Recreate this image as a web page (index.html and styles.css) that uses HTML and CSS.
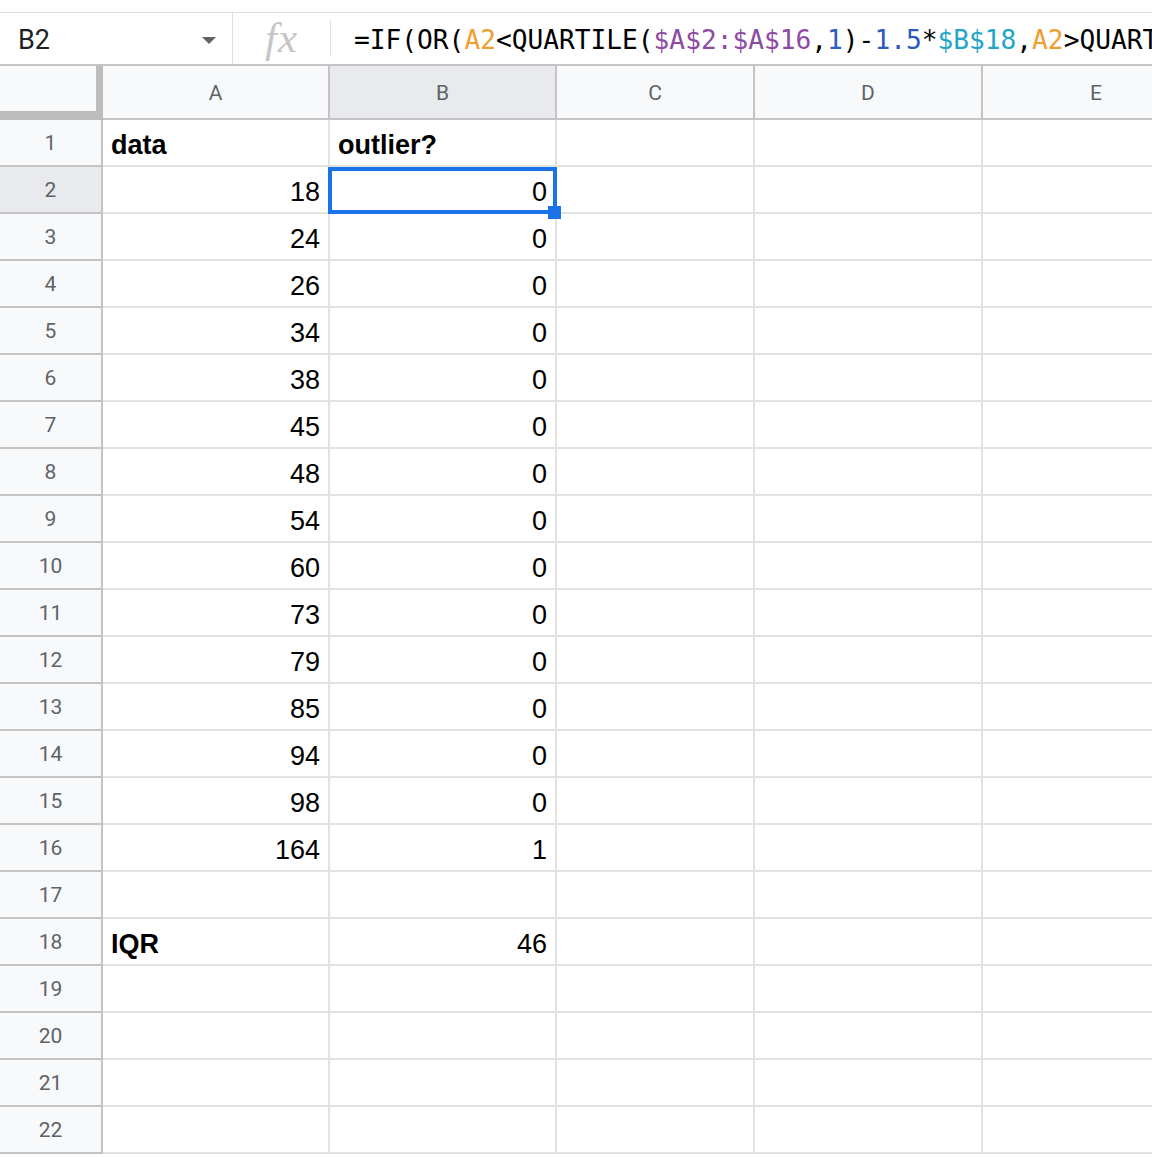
FILE: index.html
```html
<!DOCTYPE html>
<html lang="en">
<head>
    <meta charset="UTF-8">
    <title>Outliers - Sheet1</title>
    <link rel="stylesheet" href="styles.css">
</head>
<body>
    <div class="top-space"></div>

    <div class="formula-bar">
        <div class="name-box">
            <span class="cell-ref">B2</span>
            <svg class="name-arrow" width="14" height="8" viewBox="0 0 14 8"><path d="M0 0 L14 0 L7 7 Z" fill="#5f6368"/></svg>
        </div>
        <div class="fx-box"><span class="fx">fx</span></div>
        <div class="formula">=IF(OR(<span class="ref-orange">A2</span>&lt;QUARTILE(<span class="ref-purple">$A$2:$A$16</span>,<span class="ref-num">1</span>)-<span class="ref-num">1.5</span>*<span class="ref-teal">$B$18</span>,<span class="ref-orange">A2</span>&gt;QUARTILE(<span class="ref-purple">$A$2:$A$16</span>,<span class="ref-num">3</span>)+<span class="ref-num">1.5</span>*<span class="ref-teal">$B$18</span>),<span class="ref-num">1</span>,<span class="ref-num">0</span>)</div>
    </div>

    <div class="sheet">
        <div class="corner"></div>
        <div class="col-head">A</div>
        <div class="col-head active-head">B</div>
        <div class="col-head">C</div>
        <div class="col-head">D</div>
        <div class="col-head">E</div>

        <div class="row-head">1</div>
        <div class="cell bold">data</div><div class="cell bold">outlier?</div><div class="cell"></div><div class="cell"></div><div class="cell"></div>

        <div class="row-head active-head">2</div>
        <div class="cell num">18</div><div class="cell num">0</div><div class="cell"></div><div class="cell"></div><div class="cell"></div>

        <div class="row-head">3</div>
        <div class="cell num">24</div><div class="cell num">0</div><div class="cell"></div><div class="cell"></div><div class="cell"></div>

        <div class="row-head">4</div>
        <div class="cell num">26</div><div class="cell num">0</div><div class="cell"></div><div class="cell"></div><div class="cell"></div>

        <div class="row-head">5</div>
        <div class="cell num">34</div><div class="cell num">0</div><div class="cell"></div><div class="cell"></div><div class="cell"></div>

        <div class="row-head">6</div>
        <div class="cell num">38</div><div class="cell num">0</div><div class="cell"></div><div class="cell"></div><div class="cell"></div>

        <div class="row-head">7</div>
        <div class="cell num">45</div><div class="cell num">0</div><div class="cell"></div><div class="cell"></div><div class="cell"></div>

        <div class="row-head">8</div>
        <div class="cell num">48</div><div class="cell num">0</div><div class="cell"></div><div class="cell"></div><div class="cell"></div>

        <div class="row-head">9</div>
        <div class="cell num">54</div><div class="cell num">0</div><div class="cell"></div><div class="cell"></div><div class="cell"></div>

        <div class="row-head">10</div>
        <div class="cell num">60</div><div class="cell num">0</div><div class="cell"></div><div class="cell"></div><div class="cell"></div>

        <div class="row-head">11</div>
        <div class="cell num">73</div><div class="cell num">0</div><div class="cell"></div><div class="cell"></div><div class="cell"></div>

        <div class="row-head">12</div>
        <div class="cell num">79</div><div class="cell num">0</div><div class="cell"></div><div class="cell"></div><div class="cell"></div>

        <div class="row-head">13</div>
        <div class="cell num">85</div><div class="cell num">0</div><div class="cell"></div><div class="cell"></div><div class="cell"></div>

        <div class="row-head">14</div>
        <div class="cell num">94</div><div class="cell num">0</div><div class="cell"></div><div class="cell"></div><div class="cell"></div>

        <div class="row-head">15</div>
        <div class="cell num">98</div><div class="cell num">0</div><div class="cell"></div><div class="cell"></div><div class="cell"></div>

        <div class="row-head">16</div>
        <div class="cell num">164</div><div class="cell num">1</div><div class="cell"></div><div class="cell"></div><div class="cell"></div>

        <div class="row-head">17</div>
        <div class="cell"></div><div class="cell"></div><div class="cell"></div><div class="cell"></div><div class="cell"></div>

        <div class="row-head">18</div>
        <div class="cell bold">IQR</div><div class="cell num">46</div><div class="cell"></div><div class="cell"></div><div class="cell"></div>

        <div class="row-head">19</div>
        <div class="cell"></div><div class="cell"></div><div class="cell"></div><div class="cell"></div><div class="cell"></div>

        <div class="row-head">20</div>
        <div class="cell"></div><div class="cell"></div><div class="cell"></div><div class="cell"></div><div class="cell"></div>

        <div class="row-head">21</div>
        <div class="cell"></div><div class="cell"></div><div class="cell"></div><div class="cell"></div><div class="cell"></div>

        <div class="row-head">22</div>
        <div class="cell"></div><div class="cell"></div><div class="cell"></div><div class="cell"></div><div class="cell"></div>

        <!-- active cell B2 -->
        <div class="selection"></div>
        <div class="fill-handle"></div>
    </div>
</body>
</html>
```

FILE: styles.css
```css
body {
    margin: 0;
    background-color: #fff;
    font-family: "Liberation Sans", Arial, sans-serif;
    color: #000;
    overflow: hidden;
}

.top-space {
    height: 12px;
}

/* formula bar */
.formula-bar {
    display: flex;
    height: 54px;
    box-sizing: border-box;
    border-top: 1px solid #e0e0e0;
    border-bottom: 2px solid #c4c4c4;
}

.name-box {
    width: 233px;
    flex-shrink: 0;
    box-sizing: border-box;
    display: flex;
    align-items: center;
    justify-content: space-between;
    padding: 0 16px 0 18px;
    border-right: 1px solid #e0e0e0;
}

.cell-ref {
    font-family: Roboto, "Noto Sans", sans-serif;
    font-size: 27px;
    color: #202124;
    margin-top: 2px;
}

.name-arrow {
    margin-top: 4px;
}

.fx-box {
    width: 98px;
    flex-shrink: 0;
    box-sizing: border-box;
    display: flex;
    align-items: center;
    justify-content: center;
    margin: 7px 0;
    border-right: 1px solid #e0e0e0;
}

.fx {
    font-family: "Liberation Serif", "Times New Roman", serif;
    font-style: italic;
    font-size: 43px;
    color: #c6c6c6;
    letter-spacing: 1px;
    margin-bottom: 2px;
}

.formula {
    flex: 1;
    min-width: 0;
    display: flex;
    align-items: center;
    padding-left: 23px;
    padding-top: 2px;
    font-family: "DejaVu Sans Mono", "Liberation Mono", monospace;
    font-size: 26.2px;
    color: #000;
    white-space: pre;
    overflow: hidden;
}

.ref-orange { color: #f09d31; }
.ref-purple { color: #8e4aa2; }
.ref-num { color: #2a5bbd; }
.ref-teal { color: #23a5c9; }

/* grid */
.sheet {
    position: relative;
    display: grid;
    grid-template-columns: 103px 227px 227px 198px 228px 228px;
    grid-template-rows: 54px;
    grid-auto-rows: 47px;
    width: 1152px;
    overflow: hidden;
}

.corner {
    background-color: #f8f9fa;
    border-right: 7px solid #bdbdbd;
    border-bottom: 9px solid #bdbdbd;
}

.col-head,
.row-head {
    display: flex;
    align-items: center;
    justify-content: center;
    background-color: #f8f9fa;
    font-family: Roboto, "Noto Sans", sans-serif;
    font-size: 21px;
    color: #5f6368;
    border-right: 2px solid #c4c4c4;
    border-bottom: 2px solid #c4c4c4;
}

.col-head {
    padding-top: 1px;
}

.active-head {
    background-color: #e8eaed;
}

.cell {
    display: flex;
    align-items: flex-end;
    padding: 0 8px 5px 8px;
    font-size: 27px;
    line-height: 30px;
    white-space: nowrap;
    overflow: hidden;
    border-right: 2px solid #e2e2e2;
    border-bottom: 2px solid #e2e2e2;
}

.num {
    justify-content: flex-end;
}

.bold {
    font-weight: bold;
}

.selection {
    position: absolute;
    left: 328px;
    top: 101px;
    width: 229px;
    height: 47px;
    box-sizing: border-box;
    border: 4px solid #1a73e8;
}

.fill-handle {
    position: absolute;
    left: 548px;
    top: 140px;
    width: 13px;
    height: 13px;
    background-color: #1a73e8;
}
```
